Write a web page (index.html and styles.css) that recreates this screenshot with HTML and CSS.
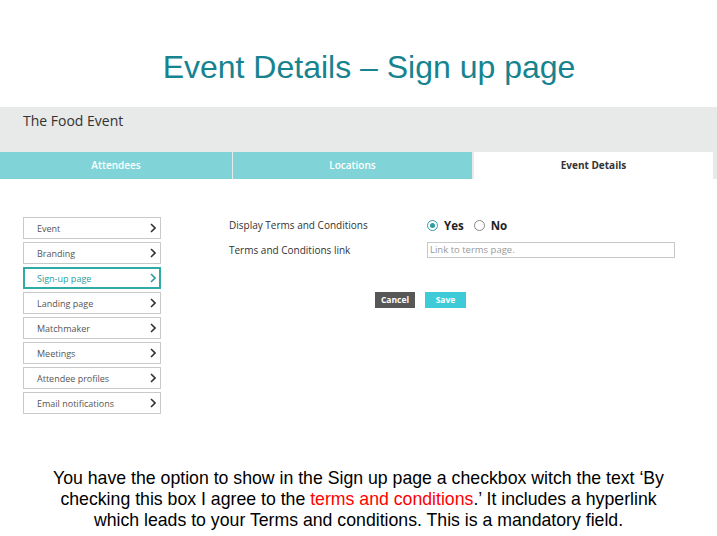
FILE: index.html
```html
<!DOCTYPE html>
<html>
<head>
<meta charset="utf-8">
<link rel="stylesheet" href="styles.css">
</head>
<body>
<div class="slide">
  <h1 class="title">Event Details – Sign up page</h1>
  <div class="app">
    <div class="app-header">The Food Event</div>
    <div class="tabs">
      <div class="tab t1">Attendees</div>
      <div class="tab t2">Locations</div>
      <div class="tab t3 active">Event Details</div>
    </div>
    <div class="content">
      <ul class="menu">
        <li class="item"><span>Event</span><svg class="chev" viewBox="0 0 6 10"><path d="M1 1 L5 5 L1 9" /></svg></li>
        <li class="item"><span>Branding</span><svg class="chev" viewBox="0 0 6 10"><path d="M1 1 L5 5 L1 9" /></svg></li>
        <li class="item current"><span>Sign-up page</span><svg class="chev" viewBox="0 0 6 10"><path d="M1 1 L5 5 L1 9" /></svg></li>
        <li class="item"><span>Landing page</span><svg class="chev" viewBox="0 0 6 10"><path d="M1 1 L5 5 L1 9" /></svg></li>
        <li class="item"><span>Matchmaker</span><svg class="chev" viewBox="0 0 6 10"><path d="M1 1 L5 5 L1 9" /></svg></li>
        <li class="item"><span>Meetings</span><svg class="chev" viewBox="0 0 6 10"><path d="M1 1 L5 5 L1 9" /></svg></li>
        <li class="item"><span>Attendee profiles</span><svg class="chev" viewBox="0 0 6 10"><path d="M1 1 L5 5 L1 9" /></svg></li>
        <li class="item"><span>Email notifications</span><svg class="chev" viewBox="0 0 6 10"><path d="M1 1 L5 5 L1 9" /></svg></li>
      </ul>
      <div class="form">
        <div class="row r1">
          <div class="label">Display Terms and Conditions</div>
          <div class="radios">
            <span class="radio on"></span><span class="opt">Yes</span>
            <span class="radio"></span><span class="opt">No</span>
          </div>
        </div>
        <div class="row">
          <div class="label">Terms and Conditions link</div>
          <div class="input">Link to terms page.</div>
        </div>
        <div class="buttons">
          <span class="btn cancel">Cancel</span>
          <span class="btn save">Save</span>
        </div>
      </div>
    </div>
  </div>
  <p class="note">You have the option to show in the Sign up page a checkbox witch the text ‘By checking this box I agree to the <span class="red">terms and conditions</span>.’ It includes a hyperlink which leads to your Terms and conditions. This is a mandatory field.</p>
</div>
</body>
</html>
```
FILE: styles.css
```css
* { box-sizing: border-box; }
html, body { margin: 0; padding: 0; background: #fff; }
.slide { width: 717px; height: 536px; overflow: hidden; position: relative; }
.title {
  margin: 0;
  height: 107px;
  padding: 48px 0 0 21px;
  text-align: center;
  font-family: "Liberation Sans", Arial, sans-serif;
  font-weight: normal;
  font-size: 32px;
  line-height: 38px;
  color: #16838f;
}
.app { font-family: "Open Sans", sans-serif; }
.app-header {
  background: #e8e9e9;
  height: 45px;
  padding: 4px 0 0 23px;
  font-size: 14px;
  line-height: 20px;
  color: #333;
}
.tabs {
  display: flex;
  height: 27px;
  background: #e8e9e9;
}
.tab {
  background: #80d4d8;
  color: #fff;
  font-size: 10px;
  font-weight: 600;
  text-align: center;
  line-height: 27px;
}
.t1 { width: 232px; margin-right: 1px; }
.t2 { width: 239px; margin-right: 2px; }
.t3 { width: 239px; }
.tab.active { background: #fff; color: #333; font-weight: 700; }
.content { display: flex; padding: 38px 0 0 23px; }
.menu { list-style: none; margin: 0; padding: 0; width: 138px; display: flex; flex-direction: column; gap: 3px; }
.item {
  height: 22px;
  border: 1px solid #c9c9c9;
  display: flex;
  align-items: center;
  justify-content: space-between;
  padding: 0 4px 0 13px;
  font-size: 9px;
  color: #555;
}
.item.current { border: 2px solid #2eaaa8; color: #2a9ea0; padding-left: 12px; padding-right: 3px; }
.chev { width: 6px; height: 10px; fill: none; stroke: #333; stroke-width: 1.6; }
.item.current .chev { stroke: #2a9ea0; }
.form { margin-left: 68px; }
.row { display: flex; align-items: center; height: 18px; }
.r1 { height: 16px; margin-bottom: 8px; }
.label { width: 198px; font-size: 10px; color: #333; }
.radios { display: flex; align-items: center; font-size: 11.5px; font-weight: 700; color: #222; }
.radio { width: 11px; height: 11px; border: 1px solid #888; border-radius: 50%; position: relative; margin-right: 6px; }
.radio.on { border-color: #2a9ea0; }
.radio.on::after { content: ""; position: absolute; left: 2px; top: 2px; width: 5px; height: 5px; border-radius: 50%; background: #2a9ea0; }
.opt { margin-right: 10px; }
.input {
  width: 248px;
  height: 16px;
  border: 1px solid #c8c8c8;
  font-size: 9.5px;
  line-height: 14px;
  color: #999;
  padding-left: 2px;
}
.buttons { display: flex; gap: 10px; margin: 33px 0 0 146px; }
.btn { display: inline-block; height: 16px; line-height: 16px; font-size: 8.5px; font-weight: 700; color: #fff; text-align: center; }
.cancel { width: 40px; background: #575757; }
.save { width: 41px; background: #3dcbd8; }
.note {
  position: absolute;
  left: 0; right: 0; top: 468px;
  margin: 0;
  padding: 0 44px;
  text-align: center;
  font-family: "Liberation Sans", Arial, sans-serif;
  font-size: 17.7px;
  line-height: 21px;
  color: #000;
}
.red { color: #ff0000; }
```
